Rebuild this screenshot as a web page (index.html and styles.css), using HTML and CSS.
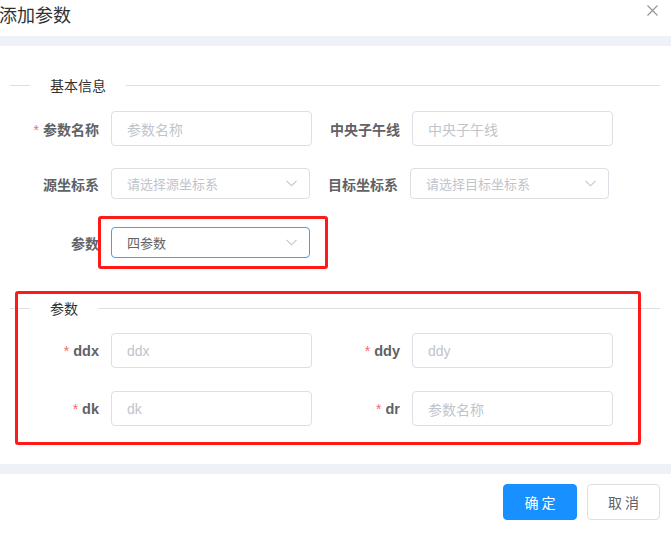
FILE: index.html
```html
<!DOCTYPE html>
<html lang="zh">
<head>
<meta charset="utf-8">
<title>添加参数</title>
<link rel="stylesheet" href="styles.css">
</head>
<body>
<div class="dialog">
  <div class="header">
    <span class="title">添加参数</span>
    <svg class="close" width="11" height="11" viewBox="0 0 11 11"><path d="M0.5 0.5 L10.5 10.5 M10.5 0.5 L0.5 10.5" stroke="#909399" stroke-width="1.1" fill="none"/></svg>
  </div>
  <div class="band"></div>
  <div class="content">
    <div class="divider d1"><span class="line short"></span><span class="dtext">基本信息</span><span class="line grow"></span></div>
    <div class="row r1">
      <label class="lbl"><i class="req">*</i>参数名称</label>
      <div class="input"><span class="ph">参数名称</span></div>
      <label class="lbl">中央子午线</label>
      <div class="input"><span class="ph">中央子午线</span></div>
    </div>
    <div class="row r2">
      <label class="lbl">源坐标系</label>
      <div class="select"><span class="ph">请选择源坐标系</span><svg class="chev" width="11" height="7" viewBox="0 0 11 7"><path d="M0.5 0.8 L5.5 5.8 L10.5 0.8" stroke="#c0c4cc" stroke-width="1.1" fill="none"/></svg></div>
      <label class="lbl">目标坐标系</label>
      <div class="select"><span class="ph">请选择目标坐标系</span><svg class="chev" width="11" height="7" viewBox="0 0 11 7"><path d="M0.5 0.8 L5.5 5.8 L10.5 0.8" stroke="#c0c4cc" stroke-width="1.1" fill="none"/></svg></div>
    </div>
    <div class="row r3">
      <label class="lbl">参数</label>
      <div class="select active"><span class="val">四参数</span><svg class="chev" width="11" height="7" viewBox="0 0 11 7"><path d="M0.5 0.8 L5.5 5.8 L10.5 0.8" stroke="#c0c4cc" stroke-width="1.1" fill="none"/></svg></div>
    </div>
    <div class="divider d2"><span class="line short"></span><span class="dtext">参数</span><span class="line grow"></span></div>
    <div class="row r4">
      <label class="lbl en"><i class="req">*</i>ddx</label>
      <div class="input"><span class="ph">ddx</span></div>
      <label class="lbl en"><i class="req">*</i>ddy</label>
      <div class="input"><span class="ph">ddy</span></div>
    </div>
    <div class="row r5">
      <label class="lbl en"><i class="req">*</i>dk</label>
      <div class="input"><span class="ph">dk</span></div>
      <label class="lbl en"><i class="req">*</i>dr</label>
      <div class="input"><span class="ph">参数名称</span></div>
    </div>
  </div>
  <div class="band"></div>
  <div class="footer">
    <button class="btn primary">确 定</button>
    <button class="btn">取 消</button>
  </div>
  <div class="mark m1"></div>
  <div class="mark m2"></div>
</div>
</body>
</html>
```
FILE: styles.css
```css
* { box-sizing: border-box; }
html, body { margin: 0; padding: 0; background: #fff; }
body {
  font-family: "Noto Sans CJK SC", "Liberation Sans", sans-serif;
  color: #606266;
  width: 671px;
  height: 533px;
  overflow: hidden;
}
.dialog { position: relative; width: 671px; height: 533px; }
.header {
  height: 36px;
  display: flex;
  justify-content: space-between;
  align-items: flex-start;
}
.title {
  font-size: 18px;
  line-height: 28px;
  color: #303133;
  margin-left: -1px;
}
.close { margin-top: 5px; margin-right: 13px; }
.band { height: 10px; background: #eef1f8; }
.content { padding: 29px 11px 0 10px; height: 418px; }
.divider {
  display: flex;
  align-items: center;
  height: 20px;
  width: 650px;
}
.divider .line { height: 1px; background: #dcdfe6; }
.divider .short { width: 20px; }
.divider .grow { flex: 1; }
.dtext { padding: 0 20px; font-size: 14px; line-height: 20px; color: #303133; }
.row { display: flex; align-items: center; margin-left: 1px; }
.r1 { margin-top: 16px; height: 35px; }
.r2 { margin-top: 22px; height: 31px; }
.r3 { margin-top: 28px; height: 31px; }
.d2 { margin-top: 40px; }
.r4 { margin-top: 15px; height: 35px; }
.r5 { margin-top: 23px; height: 35px; }
.lbl {
  width: 100px;
  padding-right: 12px;
  text-align: right;
  font-size: 14px;
  font-weight: 700;
  color: #606266;
}
.lbl.en { font-family: "Liberation Sans", "Noto Sans CJK SC", sans-serif; font-size: 14.5px; }
.req {
  font-style: normal;
  color: #f56c6c;
  margin-right: 4px;
  font-weight: 400;
  font-family: "Liberation Sans", sans-serif;
  font-size: 14px;
}
.input {
  width: 201px;
  height: 35px;
  border: 1px solid #dcdfe6;
  border-radius: 4px;
  padding-left: 15px;
  display: flex;
  align-items: center;
  font-size: 14px;
}
.ph { color: #c0c4cc; font-family: "Liberation Sans", "Noto Sans CJK SC", sans-serif; }
.select {
  width: 199px;
  height: 31px;
  border: 1px solid #dcdfe6;
  border-radius: 4px;
  padding: 0 12px 0 15px;
  display: flex;
  align-items: center;
  justify-content: space-between;
  font-size: 13px;
}
.select.active { border-color: #409eff; }
.val { color: #606266; }
.footer {
  display: flex;
  justify-content: flex-end;
  gap: 10px;
  padding: 10px 11px 0 0;
}
.btn {
  height: 36px;
  width: 74px;
  border: 1px solid #dcdfe6;
  border-radius: 4px;
  background: #fff;
  color: #606266;
  font-family: "Noto Sans CJK SC", sans-serif;
  font-size: 14px;
  padding: 0;
}
.btn + .btn { width: 73px; }
.btn.primary { background: #1890ff; border-color: #1890ff; color: #fff; }
.mark {
  position: absolute;
  border: 3px solid #ff1a1a;
  border-radius: 3px;
}
.m1 { left: 98px; top: 216px; width: 230px; height: 53px; }
.m2 { left: 15px; top: 291px; width: 626px; height: 154px; }
```
